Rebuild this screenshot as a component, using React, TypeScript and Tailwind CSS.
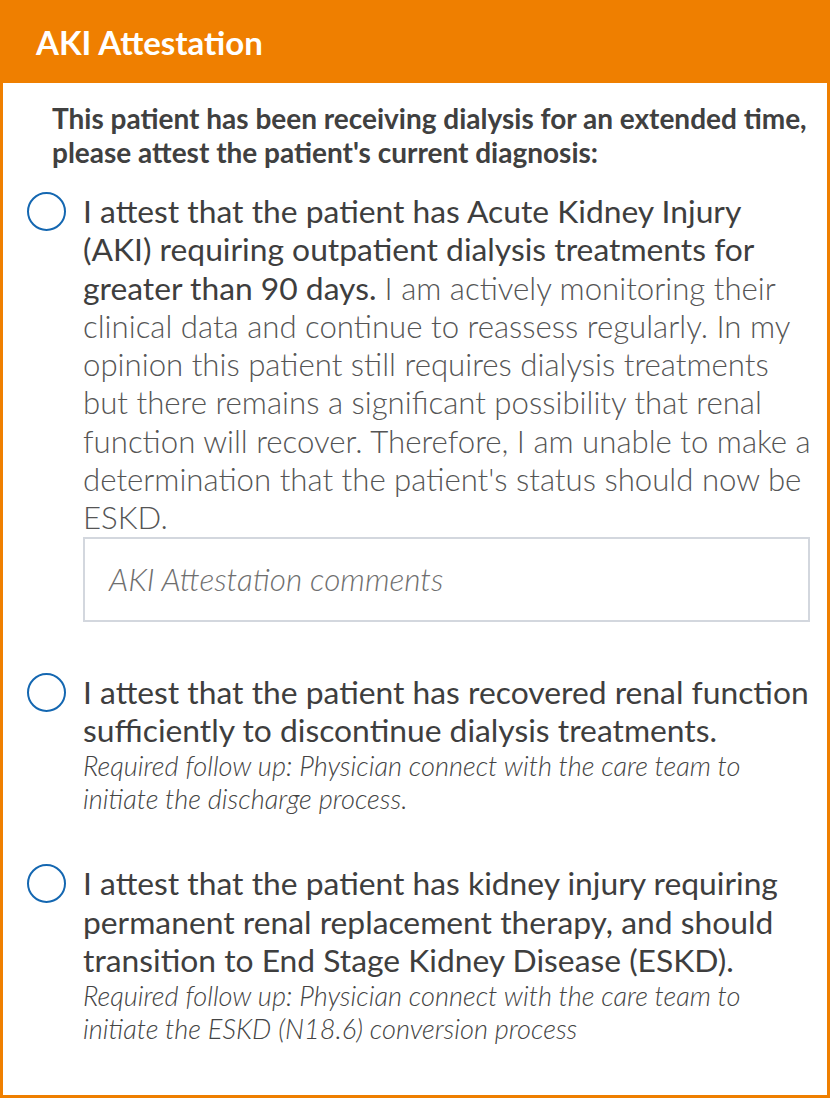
import React from "react";

function Radio() {
  return (
    <div className="w-[39px] h-[39px] shrink-0 rounded-full border-[2.5px] border-[#1467b1] bg-white" />
  );
}

export default function App() {
  return (
    <div
      className="w-[830px] h-[1098px] flex flex-col bg-white"
      style={{ fontFamily: "Lato, 'Open Sans', sans-serif" }}
    >
      <div className="h-[83px] shrink-0 bg-[#ef7f00] flex items-center pl-[36px]">
        <h1 className="text-[33px] font-bold text-white leading-none mt-[2px]">AKI Attestation</h1>
      </div>
      <div className="flex-1 border-x-[3px] border-b-[3px] border-[#ef7f00] pt-[18px]">
        <p className="pl-[49px] pr-[10px] text-[28px] leading-[34px] font-bold text-[#404040]">
          This patient has been receiving dialysis for an extended time, please attest the patient's current diagnosis:
        </p>

        <div className="flex gap-[17px] pl-[24px] pr-[14px] mt-[23px]">
          <Radio />
          <div className="flex-1">
            <p className="text-[31.8px] leading-[38.3px] text-[#3e3e3e]">
              <span className="font-normal">
                I attest that the patient has Acute Kidney Injury (AKI) requiring outpatient dialysis treatments for greater than 90 days.
              </span>{" "}
              <span className="font-light text-[31.2px] text-[#555555]">
                I am actively monitoring their clinical data and continue to reassess regularly. In my opinion this patient still requires dialysis treatments but there remains a significant possibility that renal function will recover. Therefore, I am unable to make a determination that the patient's status should now be ESKD.
              </span>
            </p>
            <div className="h-[85px] border-2 border-[#d3d7de] flex items-center pl-[24px] mr-[3px]">
              <span className="text-[31.5px] italic font-light text-[#6f6f6f]">AKI Attestation comments</span>
            </div>
          </div>
        </div>

        <div className="flex gap-[17px] pl-[24px] pr-[10px] mt-[51px]">
          <Radio />
          <div className="flex-1">
            <p className="text-[31.8px] leading-[38.3px] text-[#3e3e3e]">
              I attest that the patient has recovered renal function sufficiently to discontinue dialysis treatments.
            </p>
            <p className="text-[27.2px] leading-[33px] italic font-light text-[#444444]">
              Required follow up: Physician connect with the care team to initiate the discharge process.
            </p>
          </div>
        </div>

        <div className="flex gap-[17px] pl-[24px] pr-[10px] mt-[49px]">
          <Radio />
          <div className="flex-1">
            <p className="text-[31.8px] leading-[38.3px] text-[#3e3e3e]">
              I attest that the patient has kidney injury requiring permanent renal replacement therapy, and should transition to End Stage Kidney Disease (ESKD).
            </p>
            <p className="text-[27.2px] leading-[33px] italic font-light text-[#444444]">
              Required follow up: Physician connect with the care team to initiate the ESKD (N18.6) conversion process
            </p>
          </div>
        </div>
      </div>
    </div>
  );
}
